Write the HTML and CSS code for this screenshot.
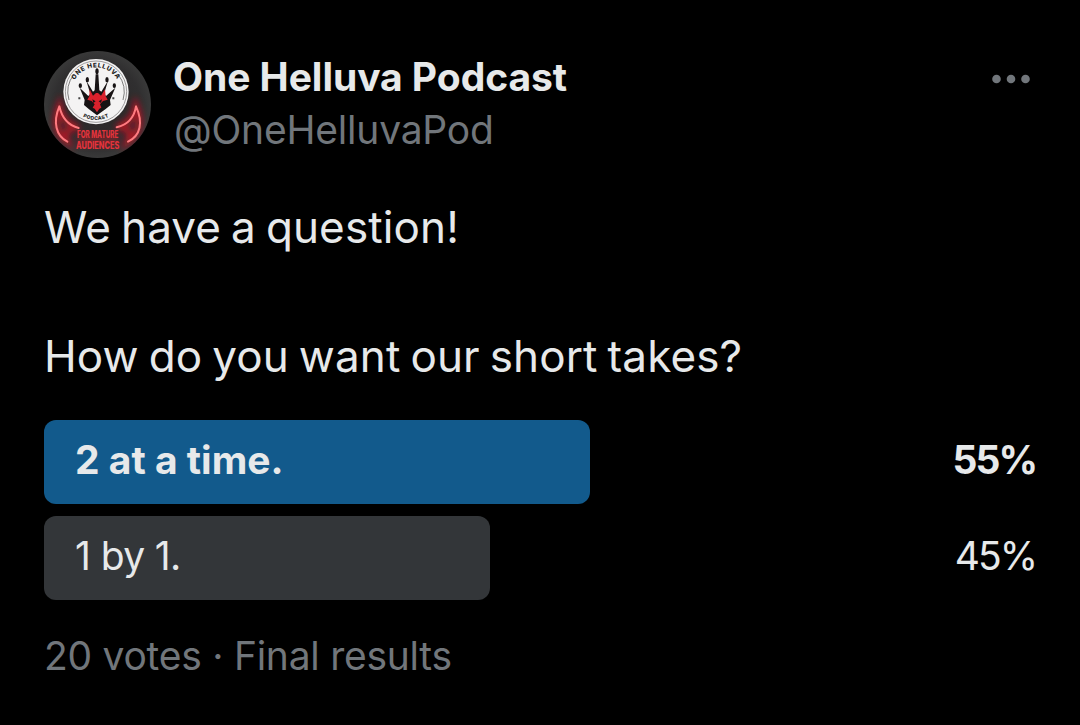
FILE: index.html
```html
<!DOCTYPE html>
<html lang="en">
<head>
    <meta charset="UTF-8">
    <meta name="viewport" content="width=device-width, initial-scale=1.0">
    <title>One Helluva Podcast</title>
    <link rel="stylesheet" href="styles.css">
</head>
<body>
    <article class="post">
        <header class="post-header">
            <svg class="avatar" viewBox="18 18 321 321" aria-hidden="true">
                <defs>
                    <radialGradient id="shade">
                        <stop offset="0" stop-color="#2a2525"/>
                        <stop offset="0.8" stop-color="#302f30"/>
                        <stop offset="1" stop-color="#393939"/>
                    </radialGradient>
                    <filter id="glow" x="-40%" y="-40%" width="180%" height="180%">
                        <feGaussianBlur stdDeviation="9"/>
                    </filter>
                    <clipPath id="round"><circle cx="178.5" cy="178.5" r="160.5"/></clipPath>
                    <path id="arcTop" d="M101 140a73 73 0 0 1 146 0"/>
                    <path id="arcBottom" d="M89 140a85 85 0 0 0 170 0"/>
                </defs>
                <g clip-path="url(#round)">
                    <rect x="18" y="18" width="321" height="321" fill="url(#shade)"/>
                    <!-- horns -->
                    <g fill="none" stroke="#d80f20" stroke-width="18" opacity="0.75" filter="url(#glow)">
                        <path d="M64 184C48 228 54 266 88 290C76 262 92 246 122 249C92 240 70 216 64 184Z"/>
                        <path d="M294 184C312 228 306 266 270 290C284 262 268 246 236 247C266 238 288 216 294 184Z"/>
                        <path d="M120 285H240" stroke-width="30" opacity="0.5"/>
                    </g>
                    <g fill="none" stroke="#ff7b80" stroke-width="6" stroke-linejoin="round" stroke-linecap="round">
                        <path d="M88 290C54 272 44 232 64 184C72 220 92 242 122 249"/>
                        <path d="M270 290C308 272 316 232 294 184C288 220 266 240 236 247"/>
                    </g>
                    <!-- badge -->
                    <circle cx="174" cy="140" r="98" fill="#f4f3f3"/>
                    <circle cx="174" cy="140" r="92" fill="none" stroke="#8b898a" stroke-width="2.5"/>
                    <path d="M93 165A85 85 0 0 1 108 88M255 165A85 85 0 0 0 240 88" fill="none" stroke="#444" stroke-width="2"/>
                    <text class="badge-text"><textPath href="#arcTop" startOffset="50%" text-anchor="middle">ONE HELLUVA</textPath></text>
                    <text class="badge-text badge-text-small"><textPath href="#arcBottom" startOffset="50%" text-anchor="middle">PODCAST</textPath></text>
                    <path d="M121 160h6M223 160h6" stroke="#444" stroke-width="6"/>
                    <!-- crown -->
                    <path fill="#171314" d="M177 211L153 193L138 180L140 165L125 128L151 153L157 147L145 107L165 140L170 136L173 88H181L184 136L190 140L210 107L198 147L204 153L232 128L216 165L218 180L202 193Z"/>
                    <g fill="#171314">
                        <ellipse cx="127" cy="122" rx="5" ry="7"/>
                        <ellipse cx="148" cy="104" rx="5" ry="8"/>
                        <ellipse cx="177" cy="79" rx="5" ry="9"/>
                        <ellipse cx="207" cy="104" rx="5" ry="8"/>
                        <ellipse cx="229" cy="122" rx="5" ry="7"/>
                    </g>
                    <path fill="#d9212c" d="M155 133L165 152L174 144H180L189 152L201 133L203 154L209 164L195 168L186 178L190 188L184 191L177 202L170 191L164 188L170 178L161 168L148 164L154 154Z"/>
                    <path fill="#171314" d="M163 163L173 169L166 174ZM192 163L182 169L189 174Z"/>
                    <g class="rating">
                        <text x="179" y="280" textLength="124" lengthAdjust="spacingAndGlyphs">FOR MATURE</text>
                        <text x="179" y="312" textLength="130" lengthAdjust="spacingAndGlyphs">AUDIENCES</text>
                    </g>
                </g>
            </svg>
            <div class="author">
                <div class="name">One Helluva Podcast</div>
                <div class="handle">@OneHelluvaPod</div>
            </div>
            <svg class="more" viewBox="0 0 38 10" aria-label="More">
                <circle cx="4.5" cy="5" r="4.3"/>
                <circle cx="19" cy="5" r="4.3"/>
                <circle cx="33.5" cy="5" r="4.3"/>
            </svg>
        </header>

        <div class="post-text">
            <p>We have a question!</p>
            <p>How do you want our short takes?</p>
        </div>

        <div class="poll">
            <div class="option winner">
                <div class="bar" style="width: 546px">2 at a time.</div>
                <div class="percent">55%</div>
            </div>
            <div class="option">
                <div class="bar" style="width: 446px">1 by 1.</div>
                <div class="percent">45%</div>
            </div>
        </div>

        <footer class="summary">20 votes · Final results</footer>
    </article>
</body>
</html>
```
FILE: styles.css
```css
body {
    margin: 0;
    background-color: #000;
    color: #e7e9ea;
    font-family: Inter, "Liberation Sans", sans-serif;
    font-size: 39px;
}

.post {
    padding: 51px 44px 0;
}

.post-header {
    display: flex;
    align-items: flex-start;
    height: 107px;
}

.avatar {
    width: 107px;
    height: 107px;
    margin-right: 22px;
}

.badge-text {
    font-size: 19px;
    font-weight: 800;
    letter-spacing: 2px;
    fill: #222;
}

.badge-text-small {
    font-size: 15px;
    letter-spacing: 1px;
}

.rating {
    font-size: 29px;
    font-weight: 800;
    text-anchor: middle;
    fill: #e5333c;
}

.author {
    flex: 1;
    white-space: nowrap;
}

.name {
    font-weight: 700;
    line-height: 52px;
    letter-spacing: -0.05px;
}

.handle {
    padding-left: 1px;
    line-height: 53px;
    letter-spacing: -0.2px;
    color: #71767b;
}

.more {
    width: 38px;
    height: 10px;
    margin: 22.5px 6px 0 0;
    fill: #71767b;
}

.post-text {
    margin-top: 37px;
    font-size: 44px;
    line-height: 64px;
    letter-spacing: 0.12px;
    word-spacing: -2.5px;
}

.post-text p {
    margin: 0 0 65px;
    white-space: nowrap;
}

.post-text p:last-child {
    margin-bottom: 0;
}

.poll {
    display: flex;
    flex-direction: column;
    gap: 12px;
    margin-top: 32px;
}

.option {
    display: flex;
    justify-content: space-between;
    line-height: 80px;
    letter-spacing: -0.6px;
}

.bar {
    box-sizing: border-box;
    height: 84px;
    padding-left: 31px;
    border-radius: 12px;
    background-color: #333639;
}

.winner {
    font-weight: 700;
    letter-spacing: 0;
}

.winner .bar {
    background-color: #125a8c;
}

.percent {
    letter-spacing: -2px;
}

.summary {
    margin-top: 30px;
    line-height: 52px;
    letter-spacing: -0.26px;
    color: #71767b;
}
```
